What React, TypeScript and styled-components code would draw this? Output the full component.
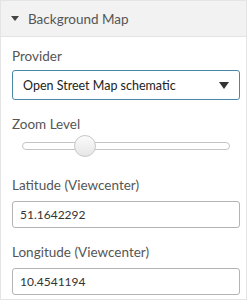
import React, { useState } from "react";
import styled, { createGlobalStyle } from "styled-components";

const GlobalStyle = createGlobalStyle`
  html, body {
    margin: 0;
    padding: 0;
    background: #ffffff;
  }
  body {
    font-family: Lato, "Open Sans", sans-serif;
    color: #555;
  }
`;

const Panel = styled.div`
  width: 247px;
  height: 300px;
  border: 1px solid #e4e4e4;
  border-top: none;
  box-sizing: border-box;
  background: #fff;
`;

const Header = styled.div`
  display: flex;
  align-items: center;
  gap: 9px;
  height: 37px;
  padding-left: 10px;
  background: #f2f2f2;
  border-top: 1px solid #e4e4e4;
  border-bottom: 1px solid #e4e4e4;
  box-sizing: border-box;
  font-size: 13.5px;
  color: #555;
`;

const Caret = styled.span`
  width: 0;
  height: 0;
  border-left: 4px solid transparent;
  border-right: 4px solid transparent;
  border-top: 5px solid #444;
`;

const Body = styled.div`
  display: flex;
  flex-direction: column;
  gap: 15px;
  padding: 10px 6px 0 11px;
`;

const Field = styled.div<{ $gap?: number }>`
  display: flex;
  flex-direction: column;
  gap: ${(p) => p.$gap ?? 6}px;
`;

const Label = styled.label`
  font-size: 13.5px;
  color: #555;
  line-height: 18px;
`;

const SelectBox = styled.div`
  display: flex;
  align-items: center;
  justify-content: space-between;
  height: 30px;
  padding: 0 10px 0 10px;
  border: 1px solid #4a86a8;
  border-radius: 3px;
  box-sizing: border-box;
  font-size: 12.5px;
  color: #222;
`;

const Arrow = styled.span`
  width: 0;
  height: 0;
  border-left: 5px solid transparent;
  border-right: 5px solid transparent;
  border-top: 7px solid #333;
`;

const Track = styled.div`
  position: relative;
  margin: 4px 10px 11px 10px;
  height: 6px;
  border: 1px solid #c4c4c4;
  border-radius: 4px;
  background: #fff;
`;

const Thumb = styled.span`
  position: absolute;
  top: 50%;
  width: 22px;
  height: 22px;
  margin-left: -11px;
  margin-top: -11px;
  border-radius: 50%;
  border: 1px solid #c8c8c8;
  box-sizing: border-box;
  background: linear-gradient(#fbfbfb, #e6e6e6);
`;

const TextInput = styled.input`
  height: 27px;
  padding: 0 7px;
  border: 1px solid #b4b4b4;
  border-radius: 3px;
  box-sizing: border-box;
  font-family: Lato, "Open Sans", sans-serif;
  font-size: 12px;
  color: #333;
  outline: none;
`;

export default function App() {
  const [lat, setLat] = useState("51.1642292");
  const [lon, setLon] = useState("10.4541194");
  const zoom = 30;

  return (
    <>
      <GlobalStyle />
      <Panel>
        <Header>
          <Caret />
          Background Map
        </Header>
        <Body>
          <Field $gap={5}>
            <Label>Provider</Label>
            <SelectBox>
              Open Street Map schematic
              <Arrow />
            </SelectBox>
          </Field>
          <Field $gap={5}>
            <Label>Zoom Level</Label>
            <Track>
              <Thumb style={{ left: `${zoom}%` }} />
            </Track>
          </Field>
          <Field $gap={7}>
            <Label>Latitude (Viewcenter)</Label>
            <TextInput value={lat} onChange={(e) => setLat(e.target.value)} />
          </Field>
          <Field $gap={7}>
            <Label>Longitude (Viewcenter)</Label>
            <TextInput value={lon} onChange={(e) => setLon(e.target.value)} />
          </Field>
        </Body>
      </Panel>
    </>
  );
}
